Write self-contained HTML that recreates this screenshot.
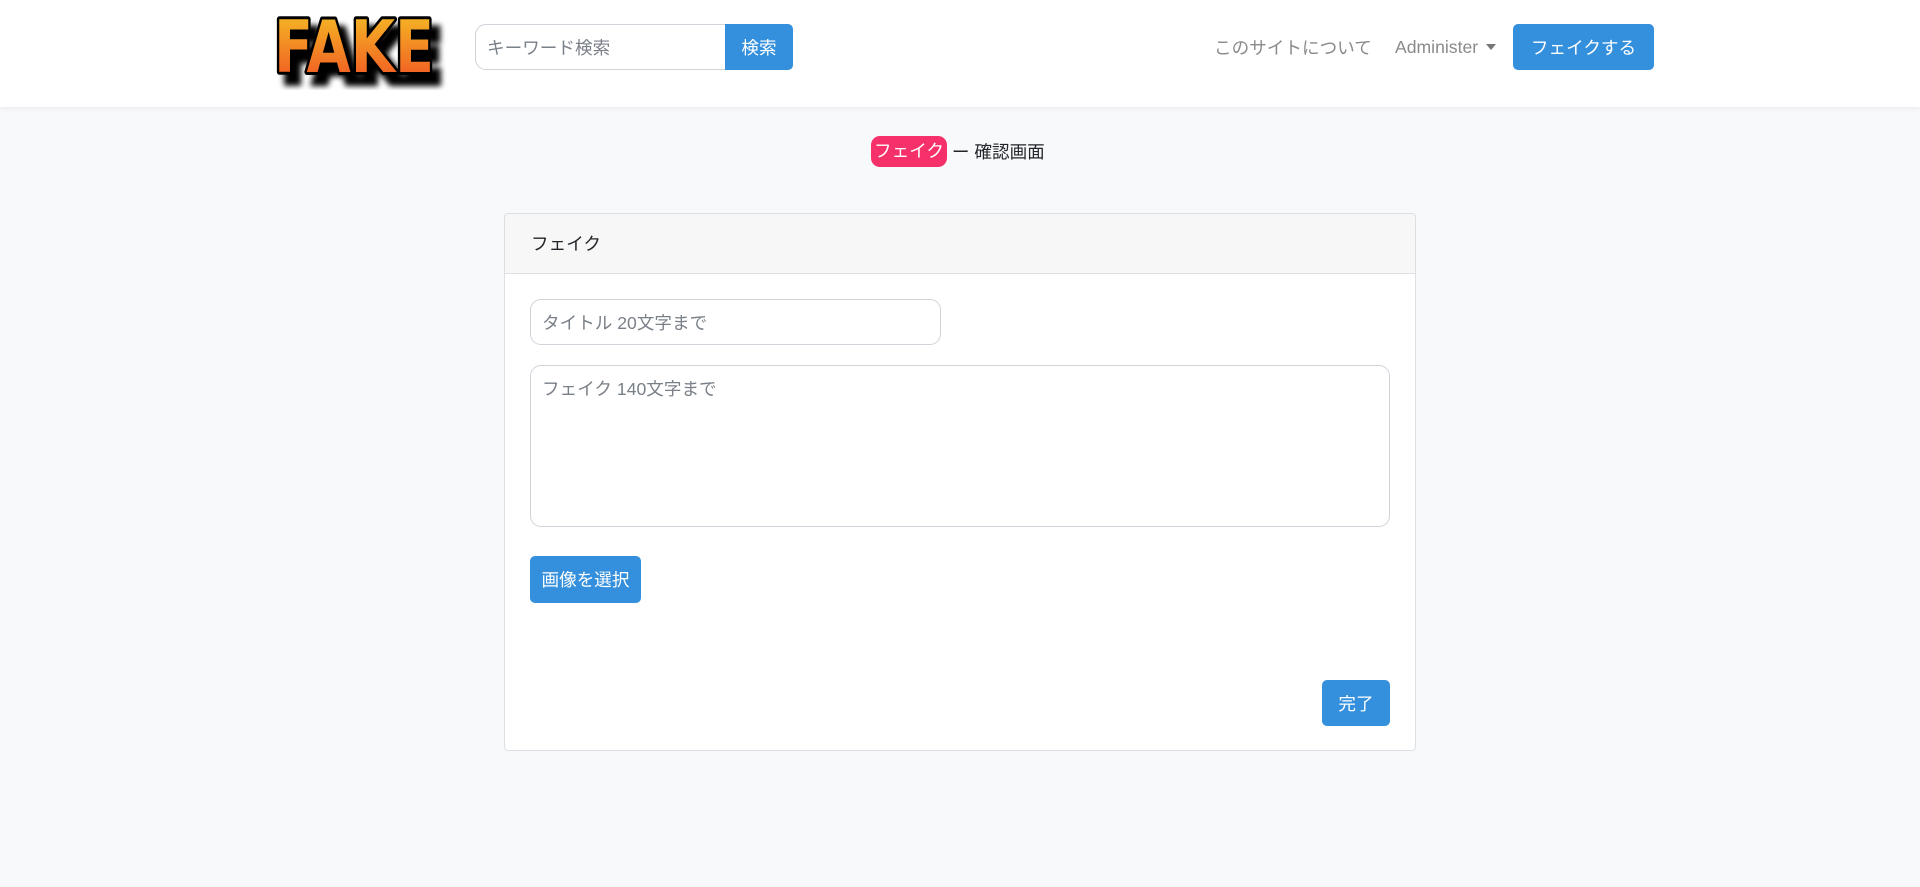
<!DOCTYPE html>
<html><head><meta charset="utf-8"><style>
*{box-sizing:border-box;margin:0;padding:0}
body{width:1920px;height:887px;background:#f8f9fb;font-family:"Liberation Sans","Noto Sans CJK JP",sans-serif;font-size:17.6px;color:#212529;position:relative;overflow:hidden}
.abs{position:absolute}
header{position:absolute;left:0;top:0;width:1920px;height:107px;background:#fff;box-shadow:0 2px 4px rgba(0,0,0,.05)}
.inp{position:absolute;background:#fff;border:1px solid #ced4da;color:#7a8088;display:flex;align-items:center;padding-left:11px}
.btn{position:absolute;background:#3490dc;color:#fff;border-radius:5px;display:flex;align-items:center;justify-content:center}
</style></head><body>
<header>
<svg class="abs" style="left:266px;top:4px" width="190" height="86" viewBox="0 0 190 86">
<defs><linearGradient id="g" x1="0" y1="0" x2="0" y2="1"><stop offset="0" stop-color="#f6c325"/><stop offset="1" stop-color="#f04e23"/></linearGradient>
<filter id="s"><feGaussianBlur stdDeviation="3"/></filter></defs>
<text x="10" y="72" font-family="DejaVu Sans" font-weight="bold" font-size="72" fill="#000" stroke="#000" stroke-width="8" filter="url(#s)" transform="translate(6,6)" textLength="160" lengthAdjust="spacingAndGlyphs">FAKE</text>
<text x="8" y="68" font-family="DejaVu Sans" font-weight="bold" font-size="72" fill="url(#g)" stroke="#000" stroke-width="6" stroke-linejoin="round" paint-order="stroke" textLength="160" lengthAdjust="spacingAndGlyphs">FAKE</text>
</svg>
<div class="inp" style="left:475px;top:24px;width:251px;height:46px;border-radius:11px 0 0 11px">キーワード検索</div>
<div class="btn" style="left:725px;top:24px;width:68px;height:46px;border-radius:0 5px 5px 0">検索</div>
<div class="abs" style="left:1214px;top:35px;color:#8a8a8a">このサイトについて</div>
<div class="abs" style="left:1395px;top:37px;color:#8a8a8a">Administer <span style="display:inline-block;width:0;height:0;border-left:5px solid transparent;border-right:5px solid transparent;border-top:6px solid #777;vertical-align:3px;margin-left:3px"></span></div>
<div class="btn" style="left:1513px;top:24px;width:141px;height:46px">フェイクする</div>
</header>
<div class="abs" style="left:871px;top:135px;height:32px;display:flex;align-items:center">
<span style="background:#f6316a;color:#fff;border-radius:9px;padding:3px 3px;line-height:25px">フェイク</span><span>&nbsp;ー 確認画面</span></div>
<div class="abs" style="left:504px;top:213px;width:912px;height:538px;background:#fff;border:1px solid #dcdfe3;border-radius:4px;overflow:hidden">
<div style="height:60px;background:#f7f7f7;border-bottom:1px solid #dcdfe3;padding-left:26px;display:flex;align-items:center">フェイク</div>
</div>
<div class="inp" style="left:530px;top:299px;width:411px;height:46px;border-radius:11px">タイトル 20文字まで</div>
<div class="inp" style="left:530px;top:365px;width:860px;height:162px;border-radius:11px;align-items:flex-start;padding-top:10px">フェイク 140文字まで</div>
<div class="btn" style="left:530px;top:556px;width:111px;height:47px">画像を選択</div>
<div class="btn" style="left:1322px;top:680px;width:68px;height:46px">完了</div>
</body></html>
